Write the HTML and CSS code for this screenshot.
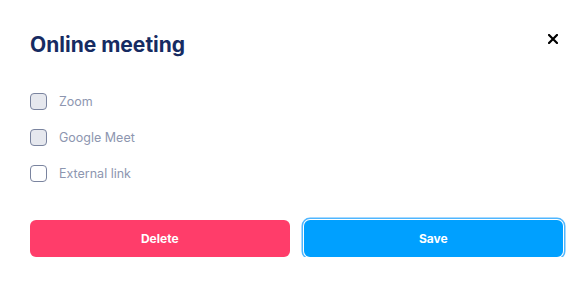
FILE: index.html
```html
<!DOCTYPE html>
<html lang="en">
<head>
    <meta charset="UTF-8">
    <meta name="viewport" content="width=device-width, initial-scale=1.0">
    <title>Online meeting</title>
    <link rel="stylesheet" href="styles.css">
</head>
<body>

    <div class="modal">
        <div class="modal-header">
            <h2>Online meeting</h2>
            <button class="close" type="button" aria-label="Close">
                <svg width="10" height="10" viewBox="0 0 10 10">
                    <path d="M1 1 L9 9 M9 1 L1 9" stroke="#000" stroke-width="2.2" stroke-linecap="square"/>
                </svg>
            </button>
        </div>

        <!-- Meeting options -->
        <div class="options">
            <label class="option"><span class="box filled"></span>Zoom</label>
            <label class="option"><span class="box filled"></span>Google Meet</label>
            <label class="option"><span class="box"></span>External link</label>
        </div>

        <div class="actions">
            <button class="btn btn-delete" type="button">Delete</button>
            <button class="btn btn-save" type="button">Save</button>
        </div>
    </div>

</body>
</html>
```

FILE: styles.css
```css
body {
    margin: 0;
    font-family: Inter, "Noto Sans", sans-serif;
    background: #fff;
}
.modal {
    padding: 30px 23px 0 30px;
}
.modal-header {
    display: flex;
    justify-content: space-between;
    align-items: flex-start;
    height: 30px;
}
h2 {
    margin: 0;
    font-size: 21px;
    font-weight: 700;
    color: #162b62;
    line-height: 29px;
}
.close {
    border: none;
    background: none;
    padding: 0;
    margin: 2px 5px 0 0;
    cursor: pointer;
}
.options {
    display: flex;
    flex-direction: column;
    gap: 18px;
    margin-top: 32px;
}
.option {
    display: flex;
    align-items: center;
    gap: 12px;
    font-size: 12.5px;
    color: #8d96b0;
    height: 18px;
}
.box {
    width: 15px;
    height: 15px;
    border: 1.5px solid #7a849f;
    border-radius: 4px;
    background: #fff;
}
.box.filled {
    background: #e6e8ee;
}
.actions {
    display: flex;
    gap: 14px;
    margin-top: 38px;
}
.btn {
    flex: 1;
    height: 37px;
    border: none;
    border-radius: 6px;
    color: #fff;
    font-family: Inter, "Noto Sans", sans-serif;
    font-size: 12px;
    font-weight: 700;
    cursor: pointer;
}
.btn-delete {
    background-color: #ff3d6a;
}
.btn-save {
    background-color: #00a0ff;
    box-shadow: 0 0 0 1px #fff, 0 0 0 2.5px #4fb6ff;
}
```
